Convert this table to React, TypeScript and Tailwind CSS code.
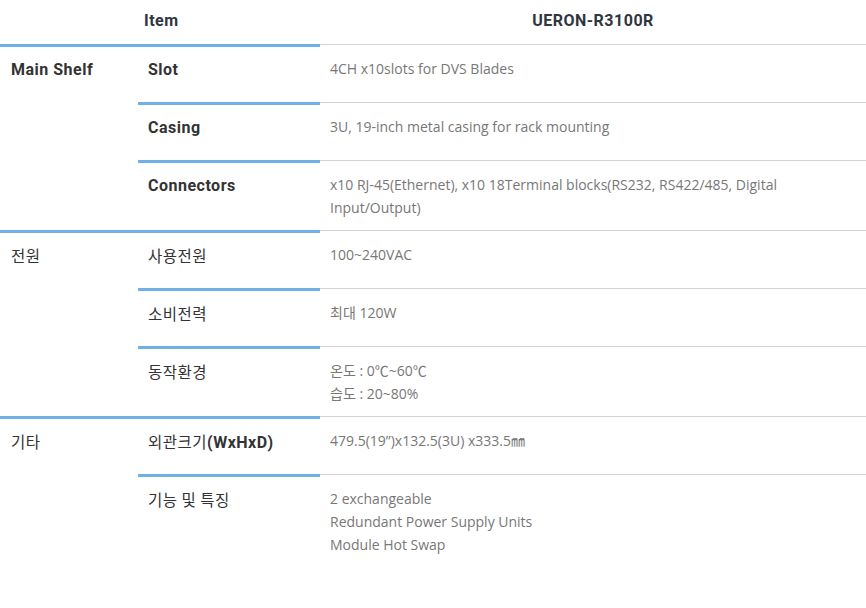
import React from "react";

const BLUE = "border-[#6fb0e8]";

type Row = { label: React.ReactNode; value: React.ReactNode };
type Group = { title: React.ReactNode; rows: Row[] };

const K = ({ children }: { children: React.ReactNode }) => (
  <span className="font-normal text-[15.5px]" style={{ fontFamily: "'Noto Sans CJK KR', sans-serif" }}>
    {children}
  </span>
);

const groups: Group[] = [
  {
    title: "Main Shelf",
    rows: [
      { label: "Slot", value: "4CH x10slots for DVS Blades" },
      { label: "Casing", value: "3U, 19-inch metal casing for rack mounting" },
      {
        label: "Connectors",
        value: (
          <>
            x10 RJ-45(Ethernet), x10 18Terminal blocks(RS232, RS422/485, Digital
            <br />
            Input/Output)
          </>
        ),
      },
    ],
  },
  {
    title: <K>전원</K>,
    rows: [
      { label: <K>사용전원</K>, value: "100~240VAC" },
      { label: <K>소비전력</K>, value: "최대 120W" },
      {
        label: <K>동작환경</K>,
        value: (
          <>
            온도 : 0℃~60℃
            <br />
            습도 : 20~80%
          </>
        ),
      },
    ],
  },
  {
    title: <K>기타</K>,
    rows: [
      {
        label: (
          <>
            <K>외관크기</K>(WxHxD)
          </>
        ),
        value: "479.5(19”)x132.5(3U) x333.5㎜",
      },
      {
        label: <K>기능 및 특징</K>,
        value: (
          <>
            2 exchangeable
            <br />
            Redundant Power Supply Units
            <br />
            Module Hot Swap
          </>
        ),
      },
    ],
  },
];

const labelFont = { fontFamily: "Roboto, 'Noto Sans CJK KR', sans-serif" };
const valueFont = { fontFamily: "'Open Sans', 'Noto Sans CJK KR', sans-serif" };

export default function App() {
  return (
    <div className="w-[866px] h-[608px] bg-white">
      <div className="flex h-[44px] text-[16px] tracking-[0.5px] font-bold text-[#2f3640] leading-[23px]" style={labelFont}>
        <div className="w-[138px]" />
        <div className="w-[182px] pl-[6px] pt-[9px]">Item</div>
        <div className="flex-1 pt-[9px] text-center">UERON-R3100R</div>
      </div>
      {groups.map((g, gi) => (
        <div key={gi} className="flex">
          <div
            className={`w-[138px] shrink-0 border-t-[3px] ${BLUE} pl-[11px] pt-[11px] text-[16px] tracking-[0.5px] font-bold text-[#333] leading-[23px]`}
            style={labelFont}
          >
            {g.title}
          </div>
          <div className="flex-1 flex flex-col">
            {g.rows.map((r, ri) => (
              <div key={ri} className="flex min-h-[58px]">
                <div
                  className={`w-[182px] shrink-0 border-t-[3px] ${BLUE} pl-[10px] pt-[11px] pb-[10px] text-[16px] tracking-[0.5px] font-bold text-[#333] leading-[23px]`}
                  style={labelFont}
                >
                  {r.label}
                </div>
                <div
                  className="flex-1 border-t border-[#d2d2d2] pl-[10px] pt-[12px] pb-[11px] text-[14px] text-[#777] leading-[23px]"
                  style={valueFont}
                >
                  {r.value}
                </div>
              </div>
            ))}
          </div>
        </div>
      ))}
    </div>
  );
}
